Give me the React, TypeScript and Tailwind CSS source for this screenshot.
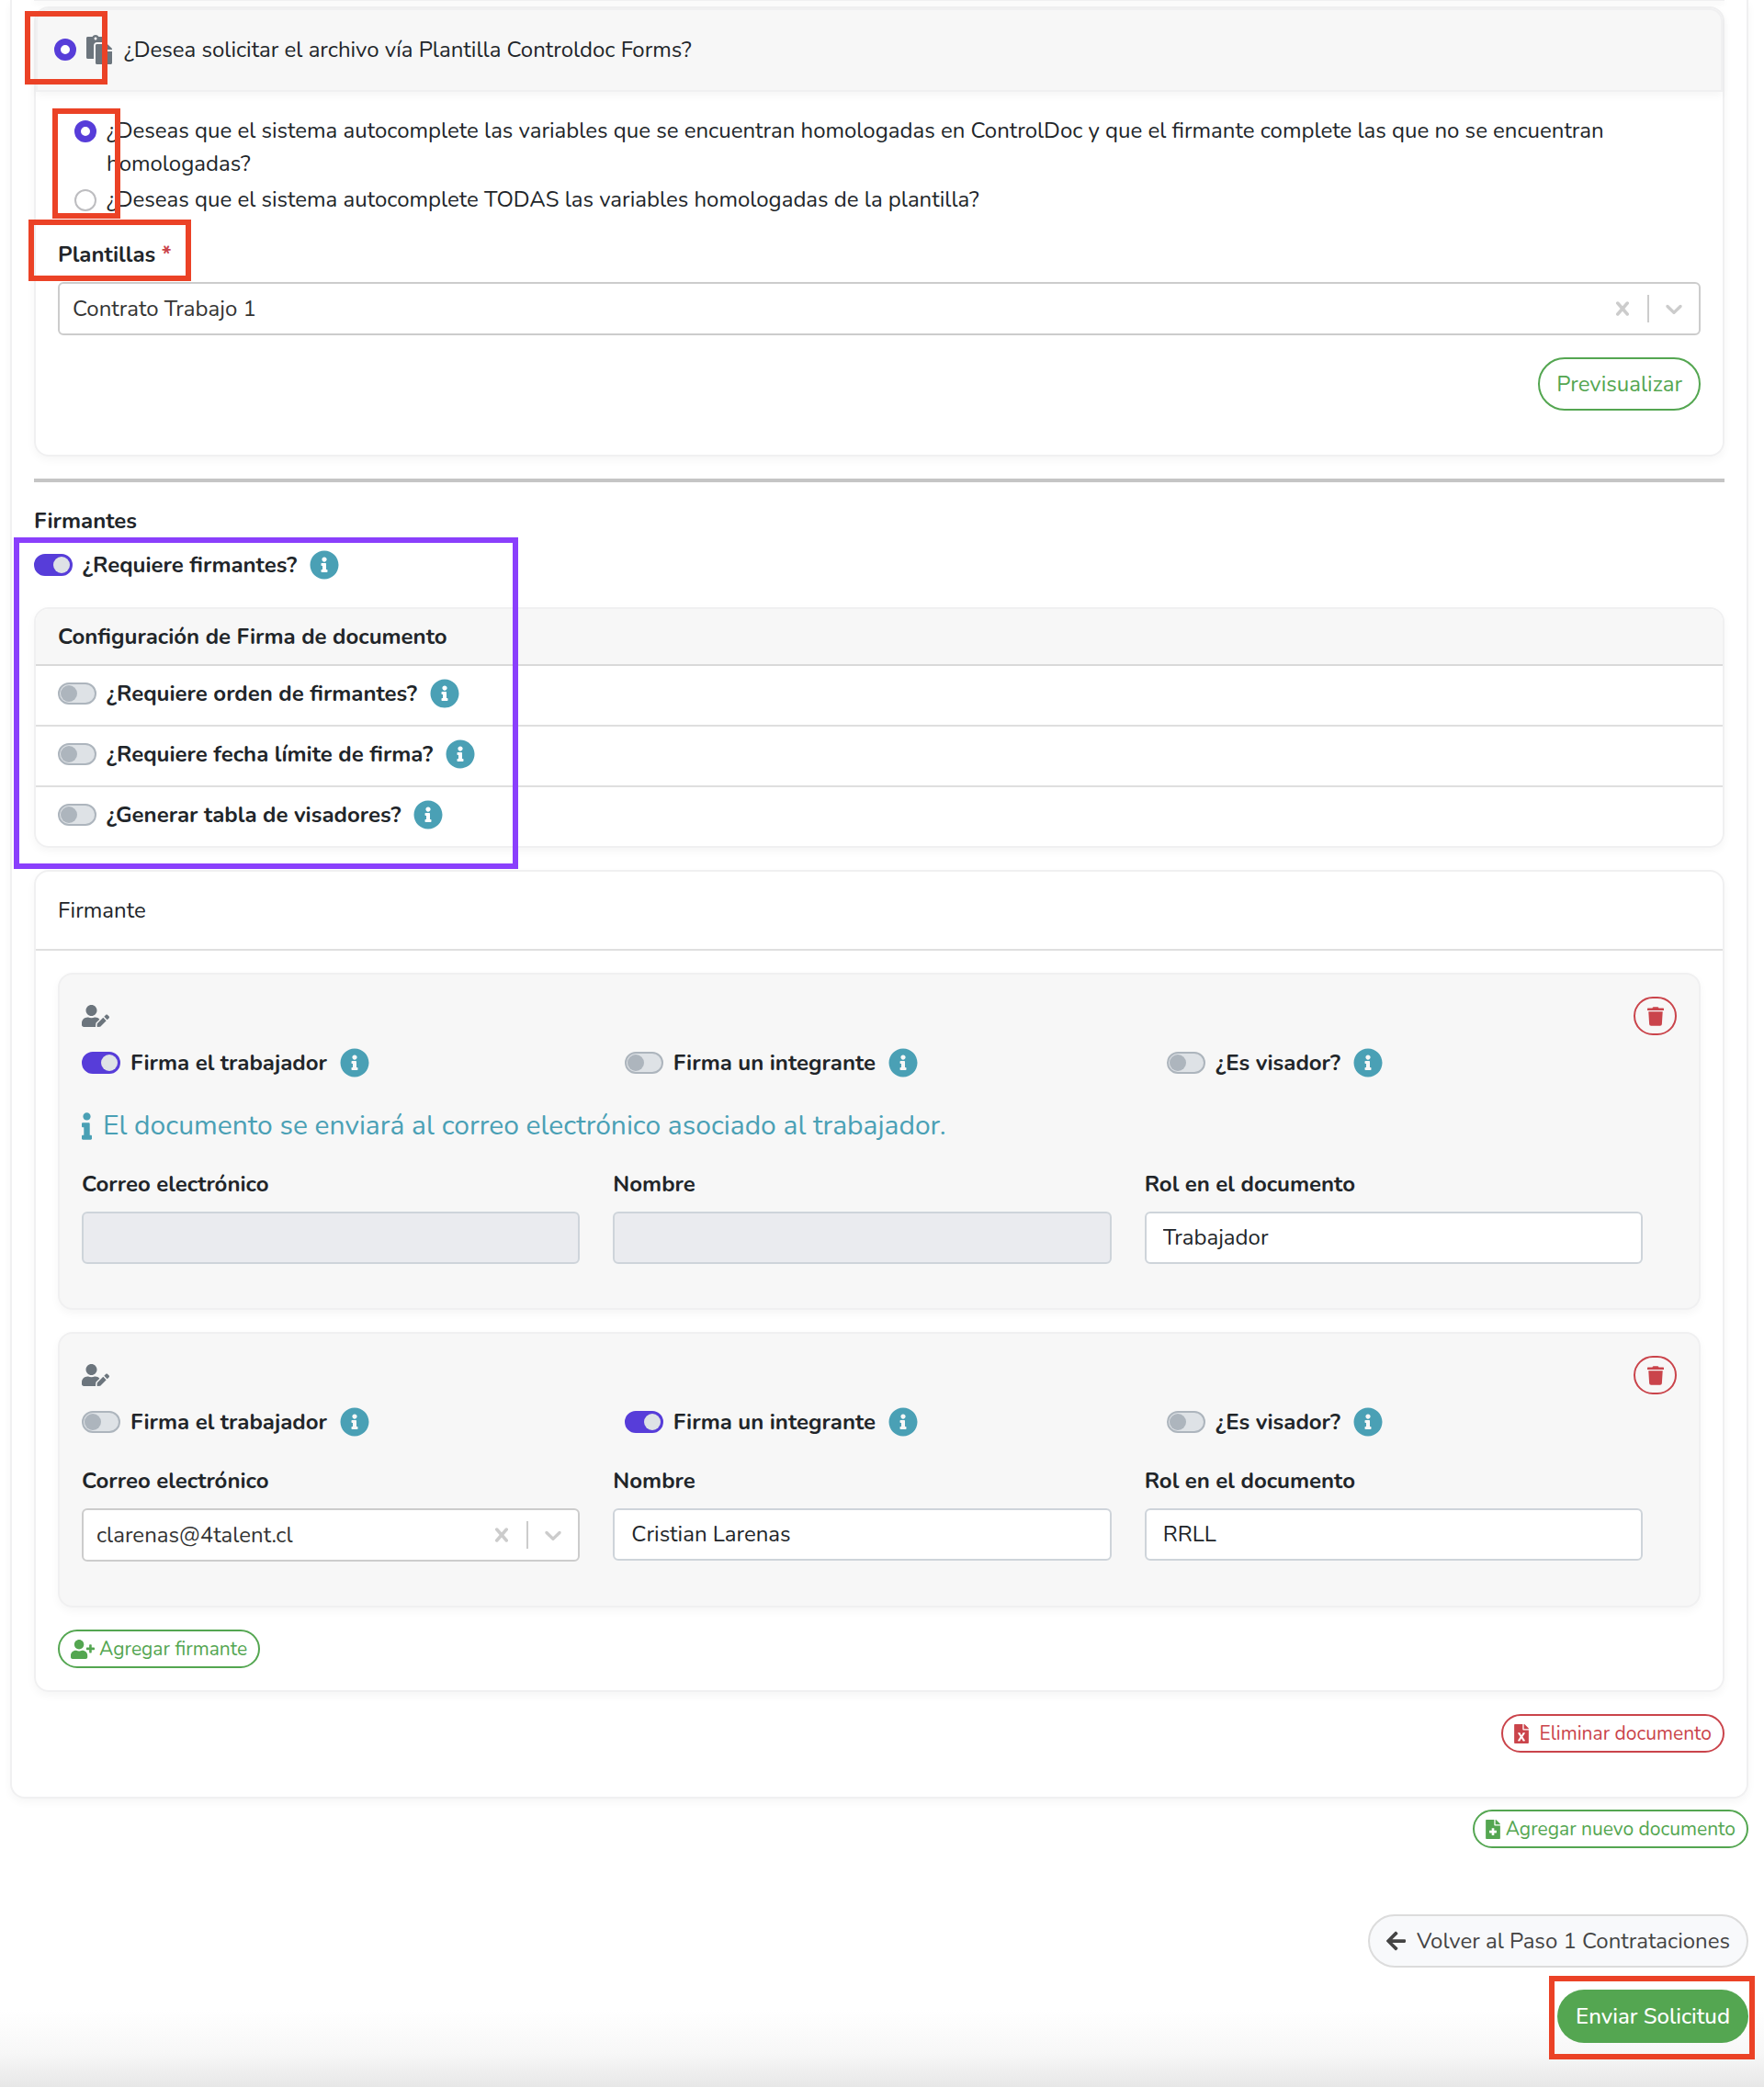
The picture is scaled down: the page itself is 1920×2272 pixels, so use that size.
import { useId, useState } from "react"
import type { ReactNode } from "react"
import {
  FaArrowLeft,
  FaFileExcel,
  FaFileMedical,
  FaInfo,
  FaInfoCircle,
  FaPaste,
  FaTrash,
  FaUserEdit,
  FaUserPlus,
} from "react-icons/fa"

type Signer = {
  id: string
  worker: boolean
  member: boolean
  approver: boolean
  email: string
  name: string
  role: string
}

const initialSigners: Signer[] = [
  { id: "1", worker: true, member: false, approver: false, email: "", name: "", role: "Trabajador" },
  {
    id: "2",
    worker: false,
    member: true,
    approver: false,
    email: "clarenas@4talent.cl",
    name: "Cristian Larenas",
    role: "RRLL",
  },
]

const card = "rounded-2xl border-2 border-[#f0f0f1] shadow-[0_4px_10px_rgba(0,0,0,0.04)]"
const smallButton =
  "flex h-[42px] items-center rounded-full border-2 px-3 text-[21px] leading-none"
const radio =
  "size-6 shrink-0 appearance-none rounded-full border-2 border-[#bdbdc0] bg-white checked:border-[7px] checked:border-[#573dd9]"

// Coloured frame that points out a part of the form
function Frame({ className }: { className: string }) {
  return <span aria-hidden="true" className={`pointer-events-none absolute z-10 border-[6px] ${className}`} />
}

function Switch({ label, defaultChecked = false }: { label: string; defaultChecked?: boolean }) {
  const id = useId()
  return (
    <div className="flex items-center">
      <input
        id={id}
        type="checkbox"
        role="switch"
        defaultChecked={defaultChecked}
        className="flex h-6 w-[42px] shrink-0 appearance-none items-center rounded-full border-2 border-[#adb5bd] bg-[#dee2e6] px-px before:size-[18px] before:rounded-full before:bg-[#adb5bd] before:content-[''] checked:justify-end checked:border-[#573dd9] checked:bg-[#573dd9] checked:before:bg-[#dee2e6]"
      />
      <label htmlFor={id} className="ml-[11px] font-bold">
        {label}
      </label>
      <button type="button" aria-label="Información" className="ml-3.5 shrink-0 text-[#4aa0b5]">
        <FaInfoCircle className="size-8" />
      </button>
    </div>
  )
}

function Select({ id, value }: { id: string; value: string }) {
  return (
    <div className="flex h-[58px] items-center rounded-md border-2 border-[#cccccc] bg-white text-[#cccccc]">
      <select id={id} defaultValue={value} className="h-full min-w-0 flex-1 appearance-none bg-transparent px-3.5 text-[#333333] outline-none">
        <option>{value}</option>
      </select>
      <button type="button" aria-label="Limpiar" className="px-3">
        <svg viewBox="0 0 20 20" className="size-[30px] fill-current">
          <path d="M14.348 14.849c-0.469 0.469-1.229 0.469-1.697 0l-2.651-3.030-2.651 3.029c-0.469 0.469-1.229 0.469-1.697 0-0.469-0.469-0.469-1.229 0-1.697l2.758-3.15-2.759-3.152c-0.469-0.469-0.469-1.228 0-1.697s1.228-0.469 1.697 0l2.652 3.031 2.651-3.031c0.469-0.469 1.228-0.469 1.697 0s0.469 1.229 0 1.697l-2.758 3.152 2.758 3.15c0.469 0.469 0.469 1.229 0 1.698z" />
        </svg>
      </button>
      <span className="h-[30px] w-0.5 bg-[#cccccc]" />
      <svg viewBox="0 0 20 20" aria-hidden="true" className="mx-3 size-[30px] shrink-0 fill-current">
        <path d="M4.516 7.548c0.436-0.446 1.043-0.481 1.576 0l3.908 3.747 3.908-3.747c0.533-0.481 1.141-0.446 1.574 0 0.436 0.445 0.408 1.197 0 1.615-0.406 0.418-4.695 4.502-4.695 4.502-0.217 0.223-0.502 0.335-0.787 0.335s-0.57-0.112-0.789-0.335c0 0-4.287-4.084-4.695-4.502s-0.436-1.17 0-1.615z" />
      </svg>
    </div>
  )
}

function Field({ label, htmlFor, children }: { label: string; htmlFor: string; children: ReactNode }) {
  return (
    <div>
      <label htmlFor={htmlFor} className="mb-3 block font-bold">
        {label}
      </label>
      {children}
    </div>
  )
}

function TextInput({ id, value, disabled = false }: { id: string; value: string; disabled?: boolean }) {
  return (
    <input
      id={id}
      type="text"
      defaultValue={value}
      disabled={disabled}
      className="block h-[57px] w-full rounded-md border-2 border-[#ced4da] bg-white px-[18px] pb-0.5 disabled:bg-[#eaebef]"
    />
  )
}

function SignerCard({ signer, onRemove }: { signer: Signer; onRemove: () => void }) {
  return (
    <div className={`${card} bg-[#f7f7f7] px-6 pt-6 pb-12`}>
      <div className="flex items-center justify-between">
        <FaUserEdit className="h-6 w-[30px] text-[#6c757d]" />
        <button
          type="button"
          aria-label="Eliminar firmante"
          onClick={onRemove}
          className={`${smallButton} w-[47px] justify-center border-[#ca444b] text-[#ca444b]`}
        >
          <FaTrash className="h-[21px] w-[18px] shrink-0" />
        </button>
      </div>

      <div className="mt-3 grid grid-cols-3 gap-9">
        <Switch label="Firma el trabajador" defaultChecked={signer.worker} />
        <Switch label="Firma un integrante" defaultChecked={signer.member} />
        <Switch label="¿Es visador?" defaultChecked={signer.approver} />
      </div>

      {signer.worker && (
        <p className="mt-7 -mb-1.5 flex items-center text-3xl leading-[46px] text-[#4aa0b5]">
          <FaInfo className="mr-3 h-[30px] w-[11px]" />
          El documento se enviará al correo electrónico asociado al trabajador.
        </p>
      )}

      <div className="mt-7 grid grid-cols-3 gap-9 pr-[37px]">
        <Field label="Correo electrónico" htmlFor={`email-${signer.id}`}>
          {signer.worker ? (
            <TextInput id={`email-${signer.id}`} value={signer.email} disabled />
          ) : (
            <Select id={`email-${signer.id}`} value={signer.email} />
          )}
        </Field>
        <Field label="Nombre" htmlFor={`name-${signer.id}`}>
          <TextInput id={`name-${signer.id}`} value={signer.name} disabled={signer.worker} />
        </Field>
        <Field label="Rol en el documento" htmlFor={`role-${signer.id}`}>
          <TextInput id={`role-${signer.id}`} value={signer.role} />
        </Field>
      </div>
    </div>
  )
}

export default function App() {
  const [signers, setSigners] = useState(initialSigners)

  const addSigner = () =>
    setSigners([
      ...signers,
      { id: String(Date.now()), worker: false, member: true, approver: false, email: "", name: "", role: "" },
    ])

  return (
    <main className="min-h-screen bg-white bg-[linear-gradient(to_top,#e7e7e7,#f7f7f7_36px,#ffffff_84px)] pr-[17px] pb-12 pl-[11px] font-[Nunito,'Open_Sans',sans-serif] text-2xl leading-9 text-[#212529]">
      <section className="rounded-b-2xl border-2 border-t-0 border-[#f0f0f1] bg-white px-6 pb-12 shadow-[0_4px_10px_rgba(0,0,0,0.04)]">
        <div className="h-px bg-[#f0f0f1] shadow-[0_2px_6px_rgba(0,0,0,0.15)]" />

        <div className={`${card} mt-1.5`}>
          <div className="relative flex h-[91px] items-center rounded-t-[14px] border-2 border-[#f0f0f1] bg-[#f7f7f7] pb-0.5 pl-[18px] shadow-[0_4px_10px_rgba(0,0,0,0.04)]">
            <Frame className="top-px -left-3.5 h-20 w-[90px] border-[#eb4226]" />
            <input id="via-forms" type="radio" name="via" defaultChecked className={radio} />
            <label htmlFor="via-forms" className="flex items-center">
              <FaPaste className="mr-[13px] ml-[11px] h-8 w-7 text-[#6c757d]" />
              ¿Desea solicitar el archivo vía Plantilla Controldoc Forms?
            </label>
          </div>

          <div className="px-6 pt-6 pb-12">
            <div className="relative flex flex-col gap-[3px] pl-[18px]">
              <Frame className="-top-1.5 -left-1.5 h-[120px] w-[74px] border-[#eb4226]" />
              <div className="flex items-start">
                <input id="auto-some" type="radio" name="autocomplete" defaultChecked className={`${radio} mt-[7px]`} />
                <label htmlFor="auto-some" className="ml-[11px]">
                  ¿Deseas que el sistema autocomplete las variables que se encuentran homologadas en ControlDoc y que el
                  firmante complete las que no se encuentran homologadas?
                </label>
              </div>
              <div className="flex items-start">
                <input id="auto-all" type="radio" name="autocomplete" className={`${radio} mt-[7px]`} />
                <label htmlFor="auto-all" className="ml-[11px]">
                  ¿Deseas que el sistema autocomplete TODAS las variables homologadas de la plantilla?
                </label>
              </div>
            </div>

            <div className="relative mt-6 mb-3">
              <Frame className="-top-5 -left-8 h-[67px] w-[177px] border-[#eb4226]" />
              <label htmlFor="template" className="block font-bold">
                Plantillas <span className="text-[#ca444b]">*</span>
              </label>
            </div>
            <Select id="template" value="Contrato Trabajo 1" />

            <div className="mt-6 flex justify-end">
              <button type="button" className="h-[58px] rounded-full border-2 border-[#54a651] px-[18px] text-[#54a651]">
                Previsualizar
              </button>
            </div>
          </div>
        </div>

        <hr className="mt-6 border-t-4 border-[#c5c5c5]" />

        <h2 className="mt-6 font-bold">Firmantes</h2>
        <div className="relative">
          <Frame className="top-0 -left-[22px] h-[361px] w-[549px] border-[#8a3ffc]" />
          <div className="pt-3">
            <Switch label="¿Requiere firmantes?" defaultChecked />
          </div>

          <div className={`${card} mt-7`}>
            <h3 className="flex h-[62px] items-center rounded-t-[14px] border-b-2 border-[#d9d9d9] bg-[#f7f7f7] px-6 font-bold">
              Configuración de Firma de documento
            </h3>
            <ul className="divide-y-2 divide-[#dfdfdf]">
              <li className="px-6 pt-3 pb-4">
                <Switch label="¿Requiere orden de firmantes?" />
              </li>
              <li className="px-6 pt-3 pb-4">
                <Switch label="¿Requiere fecha límite de firma?" />
              </li>
              <li className="px-6 pt-3 pb-4">
                <Switch label="¿Generar tabla de visadores?" />
              </li>
            </ul>
          </div>
        </div>

        <div className={`${card} mt-6`}>
          <h3 className="flex h-[86px] items-center border-b-2 border-[#dfdfdf] px-6">Firmante</h3>
          <div className="flex flex-col gap-6 p-6">
            {signers.map((signer) => (
              <SignerCard
                key={signer.id}
                signer={signer}
                onRemove={() => setSigners(signers.filter((s) => s.id !== signer.id))}
              />
            ))}
            <button
              type="button"
              onClick={addSigner}
              className={`${smallButton} gap-[5px] self-start border-[#54a651] text-[#54a651]`}
            >
              <FaUserPlus className="h-[21px] w-[26px]" />
              Agregar firmante
            </button>
          </div>
        </div>

        <div className="mt-6 flex justify-end">
          <button type="button" className={`${smallButton} gap-[11px] border-[#ca444b] text-[#ca444b]`}>
            <FaFileExcel className="h-[21px] w-4" />
            Eliminar documento
          </button>
        </div>
      </section>

      <div className="mt-3 flex justify-end">
        <button type="button" className={`${smallButton} gap-1.5 border-[#54a651] text-[#54a651]`}>
          <FaFileMedical className="h-[21px] w-4" />
          Agregar nuevo documento
        </button>
      </div>

      <div className="mt-18 flex flex-col items-end gap-6">
        <button
          type="button"
          className="flex h-[58px] items-center gap-3 rounded-full border-2 border-[#dcdcdc] bg-[#f8f9fb] px-[18px] text-[#444444]"
        >
          <FaArrowLeft className="h-6 w-[21px]" />
          Volver al Paso 1 Contrataciones
        </button>
        <div className="relative">
          <Frame className="-top-[15px] -right-[7px] h-[91px] w-[224px] border-[#eb4226]" />
          <button type="button" className="h-[58px] rounded-full bg-[#54a651] px-5 font-medium text-white">
            Enviar Solicitud
          </button>
        </div>
      </div>
    </main>
  )
}
